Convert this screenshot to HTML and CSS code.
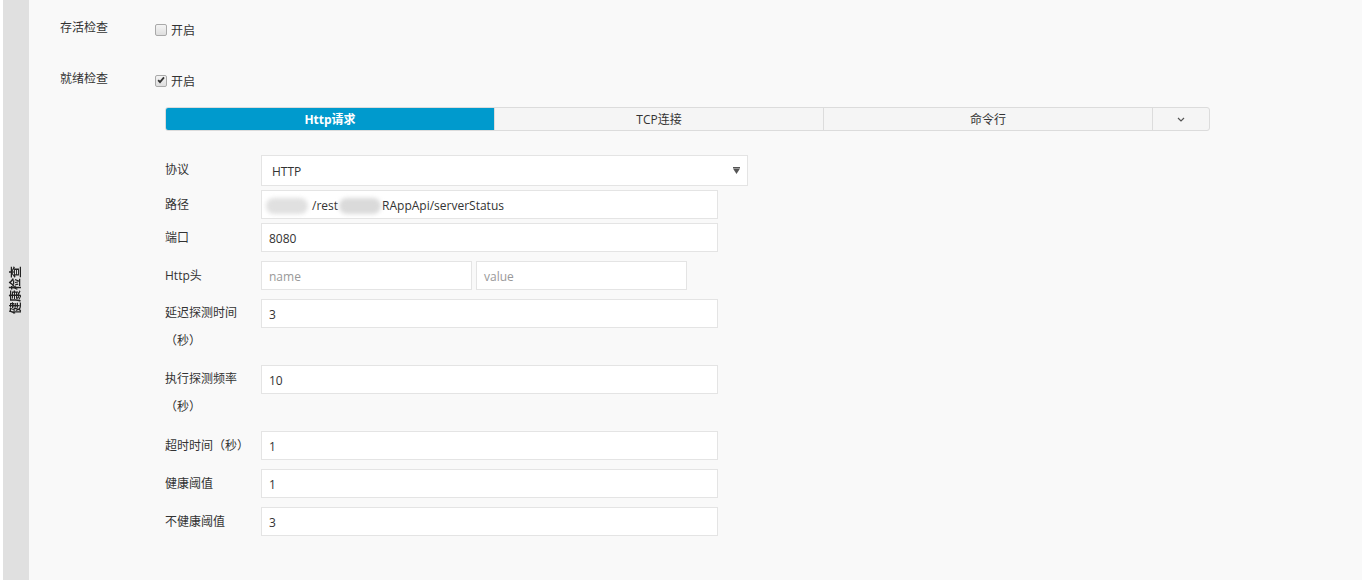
FILE: index.html
```html
<!DOCTYPE html>
<html lang="zh-CN">
<head>
<meta charset="utf-8">
<title>健康检查</title>
<link rel="stylesheet" href="styles.css">
</head>
<body>
<div class="page">
  <aside class="side"><span class="side-title">健康检查</span></aside>
  <main class="main">
    <div class="check-row">
      <span class="check-label">存活检查</span>
      <span class="check"><span class="box"></span>开启</span>
    </div>
    <div class="check-row second">
      <span class="check-label">就绪检查</span>
      <span class="check"><span class="box checked"><svg width="12" height="12" viewBox="0 0 12 12"><path d="M2.6 6.2 L4.8 8.6 L9.6 2.8" fill="none" stroke="#333" stroke-width="2.1"/></svg></span>开启</span>
    </div>
    <section class="probe">
      <div class="tabs">
        <div class="tab active">Http请求</div>
        <div class="tab">TCP连接</div>
        <div class="tab">命令行</div>
        <div class="tab more"><svg width="8" height="5" viewBox="0 0 8 5"><path d="M1 1 L4 4 L7 1" fill="none" stroke="#555" stroke-width="1.2"/></svg></div>
      </div>
      <div class="form">
        <div class="row">
          <div class="lbl">协议</div>
          <div class="field select"><span>HTTP</span><svg class="caret" width="7" height="7" viewBox="0 0 7 7"><rect x="0" y="0" width="7" height="1.2" fill="#555"/><polygon points="0,1.6 7,1.6 3.5,7" fill="#555"/></svg></div>
        </div>
        <div class="row tight">
          <div class="lbl">路径</div>
          <div class="field path"><span class="blur b1"></span><span>/rest</span><span class="blur b2"></span><span>RAppApi/serverStatus</span></div>
        </div>
        <div class="row tight">
          <div class="lbl">端口</div>
          <div class="field">8080</div>
        </div>
        <div class="row">
          <div class="lbl">Http头</div>
          <div class="pair">
            <div class="field half ph">name</div>
            <div class="field half ph">value</div>
          </div>
        </div>
        <div class="row">
          <div class="lbl two">延迟探测时间（秒）</div>
          <div class="field">3</div>
        </div>
        <div class="row">
          <div class="lbl two">执行探测频率（秒）</div>
          <div class="field">10</div>
        </div>
        <div class="row">
          <div class="lbl">超时时间（秒）</div>
          <div class="field">1</div>
        </div>
        <div class="row">
          <div class="lbl">健康阈值</div>
          <div class="field">1</div>
        </div>
        <div class="row">
          <div class="lbl">不健康阈值</div>
          <div class="field">3</div>
        </div>
      </div>
    </section>
  </main>
</div>
</body>
</html>
```

FILE: styles.css
```css
* { box-sizing: border-box; }

body {
  margin: 0;
  background: #ffffff;
  font-family: "Open Sans", "Noto Sans CJK SC", sans-serif;
  font-size: 12px;
  color: #333333;
}

.page {
  display: flex;
  width: 1359px;
  height: 580px;
  margin-left: 3px;
}

.side {
  width: 26px;
  background: #e0e0e0;
  display: flex;
  align-items: center;
  justify-content: center;
}

.side-title {
  writing-mode: vertical-rl;
  text-orientation: sideways;
  transform: rotate(180deg);
  font-weight: bold;
  font-size: 12px;
  color: #222;
  line-height: 14px;
}

.main {
  flex: 1;
  background: #f9f9f9;
  padding: 17px 0 0 31px;
}

.check-row {
  display: flex;
  align-items: center;
  height: 22px;
}

.check-row.second { margin-top: 29px; }

.check-label {
  width: 95px;
  margin-top: -3px;
}

.check {
  display: flex;
  align-items: center;
  gap: 4px;
  margin-top: 3px;
}

.box {
  width: 12px;
  height: 12px;
  border: 1px solid #a9a9a9;
  border-radius: 2px;
  background: linear-gradient(#f4f4f4, #dedede);
  display: flex;
  align-items: center;
  justify-content: center;
}

.box svg { display: block; margin-top: -1px; }

.probe {
  margin: 17px 0 0 105px;
}

.tabs {
  display: flex;
  width: 1045px;
  height: 24px;
  border: 1px solid #dcdcdc;
  border-radius: 3px;
  overflow: hidden;
  background: #f5f5f5;
}

.tab {
  width: 329px;
  border-right: 1px solid #dcdcdc;
  display: flex;
  align-items: center;
  justify-content: center;
  color: #333;
}

.tab.active {
  background: #009acd;
  color: #ffffff;
  font-weight: bold;
}

.tab.more {
  flex: 1;
  width: auto;
  border-right: none;
}

.form {
  margin-top: 24px;
  display: flex;
  flex-direction: column;
}

.row {
  display: flex;
  align-items: flex-start;
  margin-top: 9px;
}

.row:first-child { margin-top: 0; }
.row.tight { margin-top: 4px; }

.lbl {
  width: 96px;
  line-height: 29px;
  color: #333;
}

.lbl.two {
  width: 86px;
  margin-right: 10px;
  line-height: 28px;
  padding-bottom: 1px;
}

.field {
  width: 457px;
  height: 29px;
  border: 1px solid #e4e4e4;
  background: #ffffff;
  padding: 2px 7px 0;
  line-height: 25px;
  color: #333;
  display: flex;
  align-items: center;
  white-space: nowrap;
  overflow: hidden;
}

.field.select {
  width: 487px;
  height: 31px;
  padding: 1px 7px 0 10px;
  justify-content: space-between;
}

.caret { display: block; margin-top: -1px; }

.pair {
  display: flex;
  gap: 4px;
}

.field.half { width: 211px; }

.field.ph { color: #999; }

.path { padding-left: 4px; }

.blur {
  display: inline-block;
  height: 16px;
  border-radius: 8px;
  background: #dadada;
  filter: blur(2px);
}

.b1 { width: 42px; margin-right: 4px; background: #e0e0e0; }
.b2 { width: 42px; margin: 0 1px 0 1px; }
```
